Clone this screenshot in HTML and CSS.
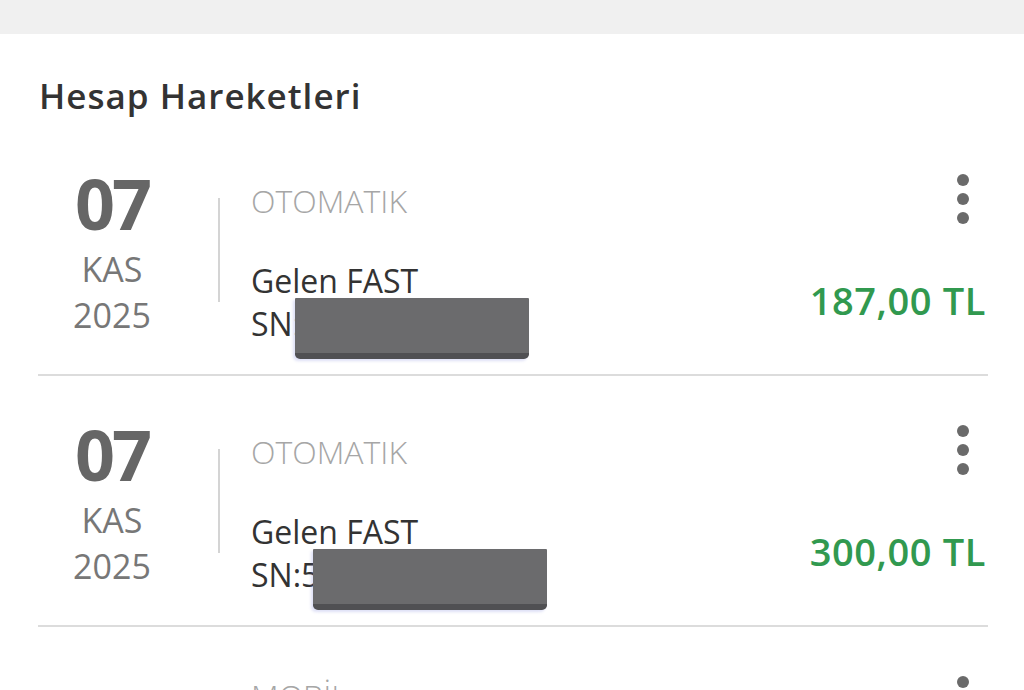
FILE: index.html
```html
<!DOCTYPE html>
<html lang="tr">
<head>
  <meta charset="UTF-8" />
  <meta name="viewport" content="width=device-width, initial-scale=1.0"/>
  <title>Hesap Hareketleri</title>
  <link rel="stylesheet" href="styles.css">
</head>
<body>
  <div class="topbar"></div>

  <div class="panel">
    <h1 class="title">Hesap Hareketleri</h1>

    <div class="tx">
      <div class="date">
        <div class="day">07</div>
        <div class="month">KAS</div>
        <div class="year">2025</div>
      </div>
      <div class="divider"></div>
      <div class="details">
        <div class="channel">OTOMATIK</div>
        <div class="desc">Gelen FAST</div>
        <div class="desc sn">SN:<span class="mask"></span></div>
      </div>
      <div class="side">
        <div class="kebab"><span></span><span></span><span></span></div>
        <div class="amount">187,00 TL</div>
      </div>
    </div>

    <div class="tx">
      <div class="date">
        <div class="day">07</div>
        <div class="month">KAS</div>
        <div class="year">2025</div>
      </div>
      <div class="divider"></div>
      <div class="details">
        <div class="channel">OTOMATIK</div>
        <div class="desc">Gelen FAST</div>
        <div class="desc sn">SN:5<span class="mask"></span></div>
      </div>
      <div class="side">
        <div class="kebab"><span></span><span></span><span></span></div>
        <div class="amount">300,00 TL</div>
      </div>
    </div>

    <div class="tx tx-tall">
      <div class="date">
        <div class="day">07</div>
        <div class="month">KAS</div>
        <div class="year">2025</div>
      </div>
      <div class="divider"></div>
      <div class="details">
        <div class="channel">MOBİL</div>
        <div class="desc">Giden FAST</div>
        <div class="desc">Kira ödemesi</div>
      </div>
      <div class="side">
        <div class="kebab"><span></span><span></span><span></span></div>
        <div class="amount out">-1.250,00 TL</div>
      </div>
    </div>
  </div>
</body>
</html>
```

FILE: styles.css
```css
body { margin: 0; font-family: "Open Sans", "Noto Sans", sans-serif; background: #fff; color: #333; overflow: hidden; }

.topbar { height: 34px; background: #f0f0f0; }

.panel { padding: 0 36px 0 38px; }

.title { margin: 42px 0 9px 1px; font-size: 35px; line-height: 40px; font-weight: 600; color: #333; letter-spacing: 1px; }

/* one transaction row */
.tx { display: flex; align-items: flex-start; padding-bottom: 29px; border-bottom: 2px solid #dcdcdc; }

.date { width: 148px; padding-top: 38px; text-align: center; }
.day { font-size: 70px; line-height: 80px; font-weight: 700; color: #666; letter-spacing: -3px; }
.month, .year { font-size: 34px; line-height: 46px; color: #777; }
.month { margin-top: 3px; }

.divider { width: 2px; height: 104px; margin: 73px 0 0 32px; background: #d4d4d4; }

.details { flex: 1; padding-top: 56px; margin-left: 31px; }
.channel { font-size: 32px; line-height: 40px; font-weight: 300; color: #a6a6a6; }
.desc { font-size: 32px; line-height: 43px; color: #333; }
.channel + .desc { margin-top: 38px; }

.sn { position: relative; }
.mask {
  position: absolute;
  top: -4px;
  margin-left: -6px;
  width: 234px;
  height: 55px;
  background: #6b6b6d;
  border-bottom: 6px solid #505053;
  border-radius: 1px 1px 5px 5px;
  box-shadow: -2px 2px 3px rgba(90, 100, 210, 0.2);
}

.side { display: flex; flex-direction: column; align-items: flex-end; }
.kebab { display: flex; flex-direction: column; gap: 7px; margin: 49px 19px 0 0; }
.kebab span { width: 12px; height: 12px; border-radius: 50%; background: #6a6a6a; }
.amount { margin: 54px 2px 0 0; font-size: 38px; line-height: 44px; font-weight: 600; color: #31994f; letter-spacing: 0.6px; }
.amount.out { color: #333; }

.tx-tall .details { padding-top: 49px; }
.tx-tall .date { padding-top: 70px; }
```
